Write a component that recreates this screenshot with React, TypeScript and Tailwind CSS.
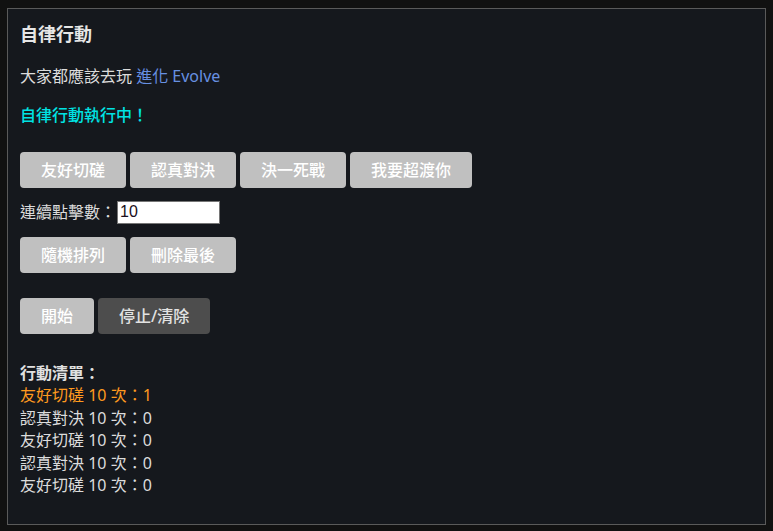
import React from 'react';

const font = { fontFamily: '"Noto Sans", "Noto Sans CJK TC", sans-serif' };

const actions = ['友好切磋', '認真對決', '決一死戰', '我要超渡你'];

const list = [
  { name: '友好切磋', count: 1, active: true },
  { name: '認真對決', count: 0 },
  { name: '友好切磋', count: 0 },
  { name: '認真對決', count: 0 },
  { name: '友好切磋', count: 0 },
];

const Btn: React.FC<{ label: string; dark?: boolean }> = ({ label, dark }) => (
  <button
    className={
      'h-9 px-[21px] rounded text-base font-medium leading-[1.4] ' +
      (dark ? 'bg-[#4d4d4d] text-[#e2e2e2]' : 'bg-[#c0c0c0] text-white')
    }
  >
    {label}
  </button>
);

const App: React.FC = () => {
  return (
    <div className="min-h-screen bg-[#111111] pt-[8px] px-[7px] pb-[7px]" style={font}>
      <div className="h-[517px] border border-[#5a5a5a] bg-[#15181d] px-3 pt-[13px] text-[#dcdcdc] text-base leading-[1.4]">
        <h1 className="text-[18px] font-bold leading-[1.4] text-[#e6e6e6]">自律行動</h1>
        <p className="mt-[18px]">
          大家都應該去玩 <a className="text-[#6790e2]">進化 Evolve</a>
        </p>
        <p className="mt-[16px] text-[#00e3e3] font-medium">自律行動執行中！</p>

        <div className="mt-[26px] flex gap-1">
          {actions.map((a) => (
            <Btn key={a} label={a} />
          ))}
        </div>

        <div className="mt-[13px] flex items-center">
          <span>連續點擊數：</span>
          <input
            className="ml-[1px] h-[23px] w-[103px] border border-[#767676] bg-white px-[2px] text-[#1a1020] text-base outline-none"
            style={{ fontFamily: '"Liberation Sans", Arial, sans-serif' }}
            defaultValue="10"
          />
        </div>

        <div className="mt-[13px] flex gap-1">
          <Btn label="隨機排列" />
          <Btn label="刪除最後" />
        </div>

        <div className="mt-[25px] flex gap-1">
          <Btn label="開始" />
          <Btn label="停止/清除" dark />
        </div>

        <div className="mt-[28px]">
          <div className="font-bold text-[#e0e0e0]">行動清單：</div>
          {list.map((item, i) => (
            <div key={i} className={item.active ? 'text-[#ff9a1f]' : ''}>
              {item.name} 10 次：{item.count}
            </div>
          ))}
        </div>
      </div>
    </div>
  );
};

export default App;
